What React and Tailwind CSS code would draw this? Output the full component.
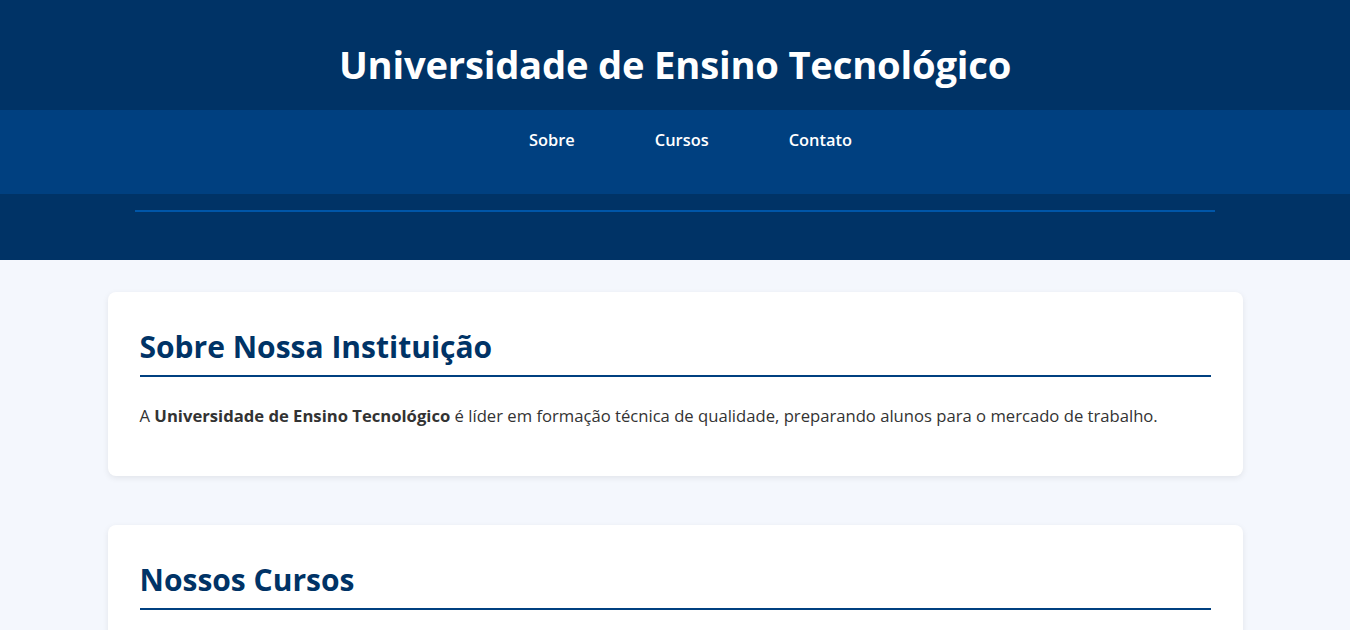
export default function App() {
  const font = { fontFamily: '"Open Sans", "Noto Sans", sans-serif' };
  return (
    <div className="min-h-[630px] bg-[#f4f7fd] text-[#333]" style={font}>
      <header className="bg-[#003366] pb-[48px]">
        <div className="h-[110px] flex items-center justify-center pt-[18px]">
          <h1 className="text-[38.2px] font-bold text-white leading-none tracking-[-0.2px]">Universidade de Ensino Tecnológico</h1>
        </div>
        <nav className="h-[84px] bg-[#004080] pt-[18px]">
          <ul className="flex justify-center pl-[31px] gap-[80px]">
            <li><a className="text-[16.4px] font-semibold text-white leading-6">Sobre</a></li>
            <li><a className="text-[16.4px] font-semibold text-white leading-6">Cursos</a></li>
            <li><a className="text-[16.4px] font-semibold text-white leading-6">Contato</a></li>
          </ul>
        </nav>
        <div className="mt-[16px] h-[2px] w-[80%] mx-auto bg-[#0056a8]"></div>
      </header>
      <main className="flex flex-col items-center gap-[49px] pt-[32px]">
        <section className="w-[1135px] bg-white rounded-lg shadow-[0_2px_6px_rgba(0,0,0,0.08)] px-8 pt-[36px] pb-[48px]">
          <h2 className="text-[30px] font-bold text-[#003366] leading-[38px] pb-[9px] border-b-2 border-[#004080]">Sobre Nossa Instituição</h2>
          <p className="mt-[27px] text-[16.65px] leading-6">
            A <strong className="font-bold">Universidade de Ensino Tecnológico</strong> é líder em formação técnica de qualidade, preparando alunos para o mercado de trabalho.
          </p>
        </section>
        <section className="w-[1135px] bg-white rounded-lg shadow-[0_2px_6px_rgba(0,0,0,0.08)] px-8 pt-[36px] pb-[48px]">
          <h2 className="text-[30px] font-bold text-[#003366] leading-[38px] pb-[9px] border-b-2 border-[#004080]">Nossos Cursos</h2>
          <p className="mt-[27px] text-[16.65px] leading-6">&nbsp;</p>
        </section>
      </main>
    </div>
  );
}
